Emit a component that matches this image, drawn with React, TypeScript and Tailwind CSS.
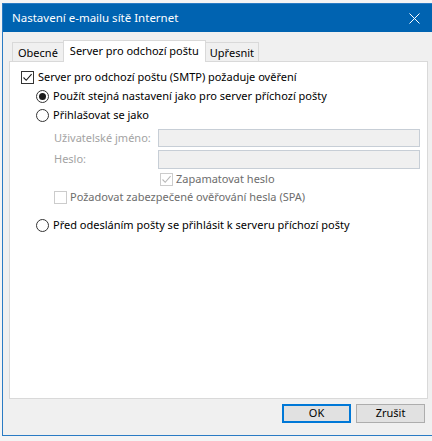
import type { ReactNode } from "react";

const font = { fontFamily: '"Segoe UI", "Noto Sans", "DejaVu Sans", sans-serif' };

function CheckBox({ checked, disabled }: { checked?: boolean; disabled?: boolean }) {
  return (
    <span
      className={`flex h-[13px] w-[13px] shrink-0 items-center justify-center border bg-white ${
        disabled ? "border-[#cccccc]" : "border-[#333333]"
      }`}
    >
      {checked && (
        <svg width="11" height="11" viewBox="0 0 11 11">
          <path
            d="M1.5 5.5 L4.2 8.3 L9.6 2.2"
            fill="none"
            stroke={disabled ? "#b8b8b8" : "#1a1a1a"}
            strokeWidth="1.1"
          />
        </svg>
      )}
    </span>
  );
}

function Radio({ checked }: { checked?: boolean }) {
  return (
    <span className="flex h-[13px] w-[13px] shrink-0 items-center justify-center rounded-full border border-[#333333] bg-white">
      {checked && <span className="h-[7px] w-[7px] rounded-full bg-[#1a1a1a]" />}
    </span>
  );
}

function Row({ children, className = "" }: { children: ReactNode; className?: string }) {
  return (
    <div className={`flex h-[19px] items-center gap-[3px] whitespace-nowrap ${className}`}>{children}</div>
  );
}

export default function App() {
  return (
    <div className="h-[441px] w-[432px] overflow-hidden bg-[#f4f4f4] pl-[2px] pt-[3px]" style={font}>
      <div className="flex h-[433px] w-[430px] flex-col border border-r-0 border-[#2a7bc4] bg-[#f0f0f0] text-[11px] text-black">
        {/* title bar */}
        <div className="flex h-[28px] shrink-0 items-center justify-between bg-[#0063b1] pl-[9px] pr-[12px] text-white">
          <span className="text-[11.5px]">Nastavení e-mailu sítě Internet</span>
          <svg width="11" height="11" viewBox="0 0 11 11">
            <path d="M0.5 0.5 L10.5 10.5 M10.5 0.5 L0.5 10.5" stroke="#ffffff" strokeWidth="1" />
          </svg>
        </div>

        {/* tabs */}
        <div className="mt-[8px] flex h-[21px] shrink-0 items-end pl-[9px]">
          <div className="-mr-px flex h-[19px] items-center border border-b-0 border-[#d9d9d9] bg-[#f0f0f0] px-[5px] pt-[2px]">
            Obecné
          </div>
          <div className="relative z-10 -mb-px flex h-[22px] items-center border border-b-0 border-[#d9d9d9] bg-white px-[6px] pb-[1px]">
            Server pro odchozí poštu
          </div>
          <div className="-ml-px flex h-[19px] items-center border border-b-0 border-[#d9d9d9] bg-[#f0f0f0] px-[4px] pt-[2px]">
            Upřesnit
          </div>
        </div>

        {/* tab page */}
        <div className="ml-[6px] mr-[4px] h-[338px] shrink-0 border border-[#d9d9d9] bg-white pl-[11px] pt-[6px]">
          <Row>
            <CheckBox checked />
            <span className="ml-[1px]">Server pro odchozí poštu (SMTP) požaduje ověření</span>
          </Row>
          <div className="pl-[15px]">
            <Row className="gap-[4px]">
              <Radio checked />
              <span>Použít stejná nastavení jako pro server příchozí pošty</span>
            </Row>
            <Row className="gap-[4px]">
              <Radio />
              <span>Přihlašovat se jako</span>
            </Row>
            <div className="pl-[18px] text-[#a3a3a3]">
              <div className="mt-[4px] flex flex-col gap-[3px] whitespace-nowrap">
                <div className="flex h-[18px] items-center">
                  <span className="w-[104px]">Uživatelské jméno:</span>
                  <span className="mr-[7px] h-[18px] flex-1 border border-[#c7ced6] bg-[#f0f0f0]" />
                </div>
                <div className="flex h-[18px] items-center">
                  <span className="w-[104px]">Heslo:</span>
                  <span className="mr-[7px] h-[19px] flex-1 border border-[#c7ced6] bg-[#f0f0f0]" />
                </div>
              </div>
              <Row className="ml-[106px] mt-[2px]">
                <CheckBox checked disabled />
                <span className="text-[#6d6d6d]">Zapamatovat heslo</span>
              </Row>
              <Row className="mt-[-1px]">
                <CheckBox disabled />
                <span className="text-[#6d6d6d]">Požadovat zabezpečené ověřování hesla (SPA)</span>
              </Row>
            </div>
            <Row className="mt-[9px] gap-[4px]">
              <Radio />
              <span>Před odesláním pošty se přihlásit k serveru příchozí pošty</span>
            </Row>
          </div>
        </div>

        {/* buttons */}
        <div className="mt-[5px] flex justify-end gap-[5px] pr-[7px]">
          <button className="flex h-[19px] w-[69px] items-center justify-center border-2 border-[#0078d7] bg-[#e1e1e1] text-[11px]">
            OK
          </button>
          <button className="flex h-[19px] w-[69px] items-center justify-center border border-[#adadad] bg-[#e1e1e1] text-[11px]">
            Zrušit
          </button>
        </div>
      </div>
    </div>
  );
}
